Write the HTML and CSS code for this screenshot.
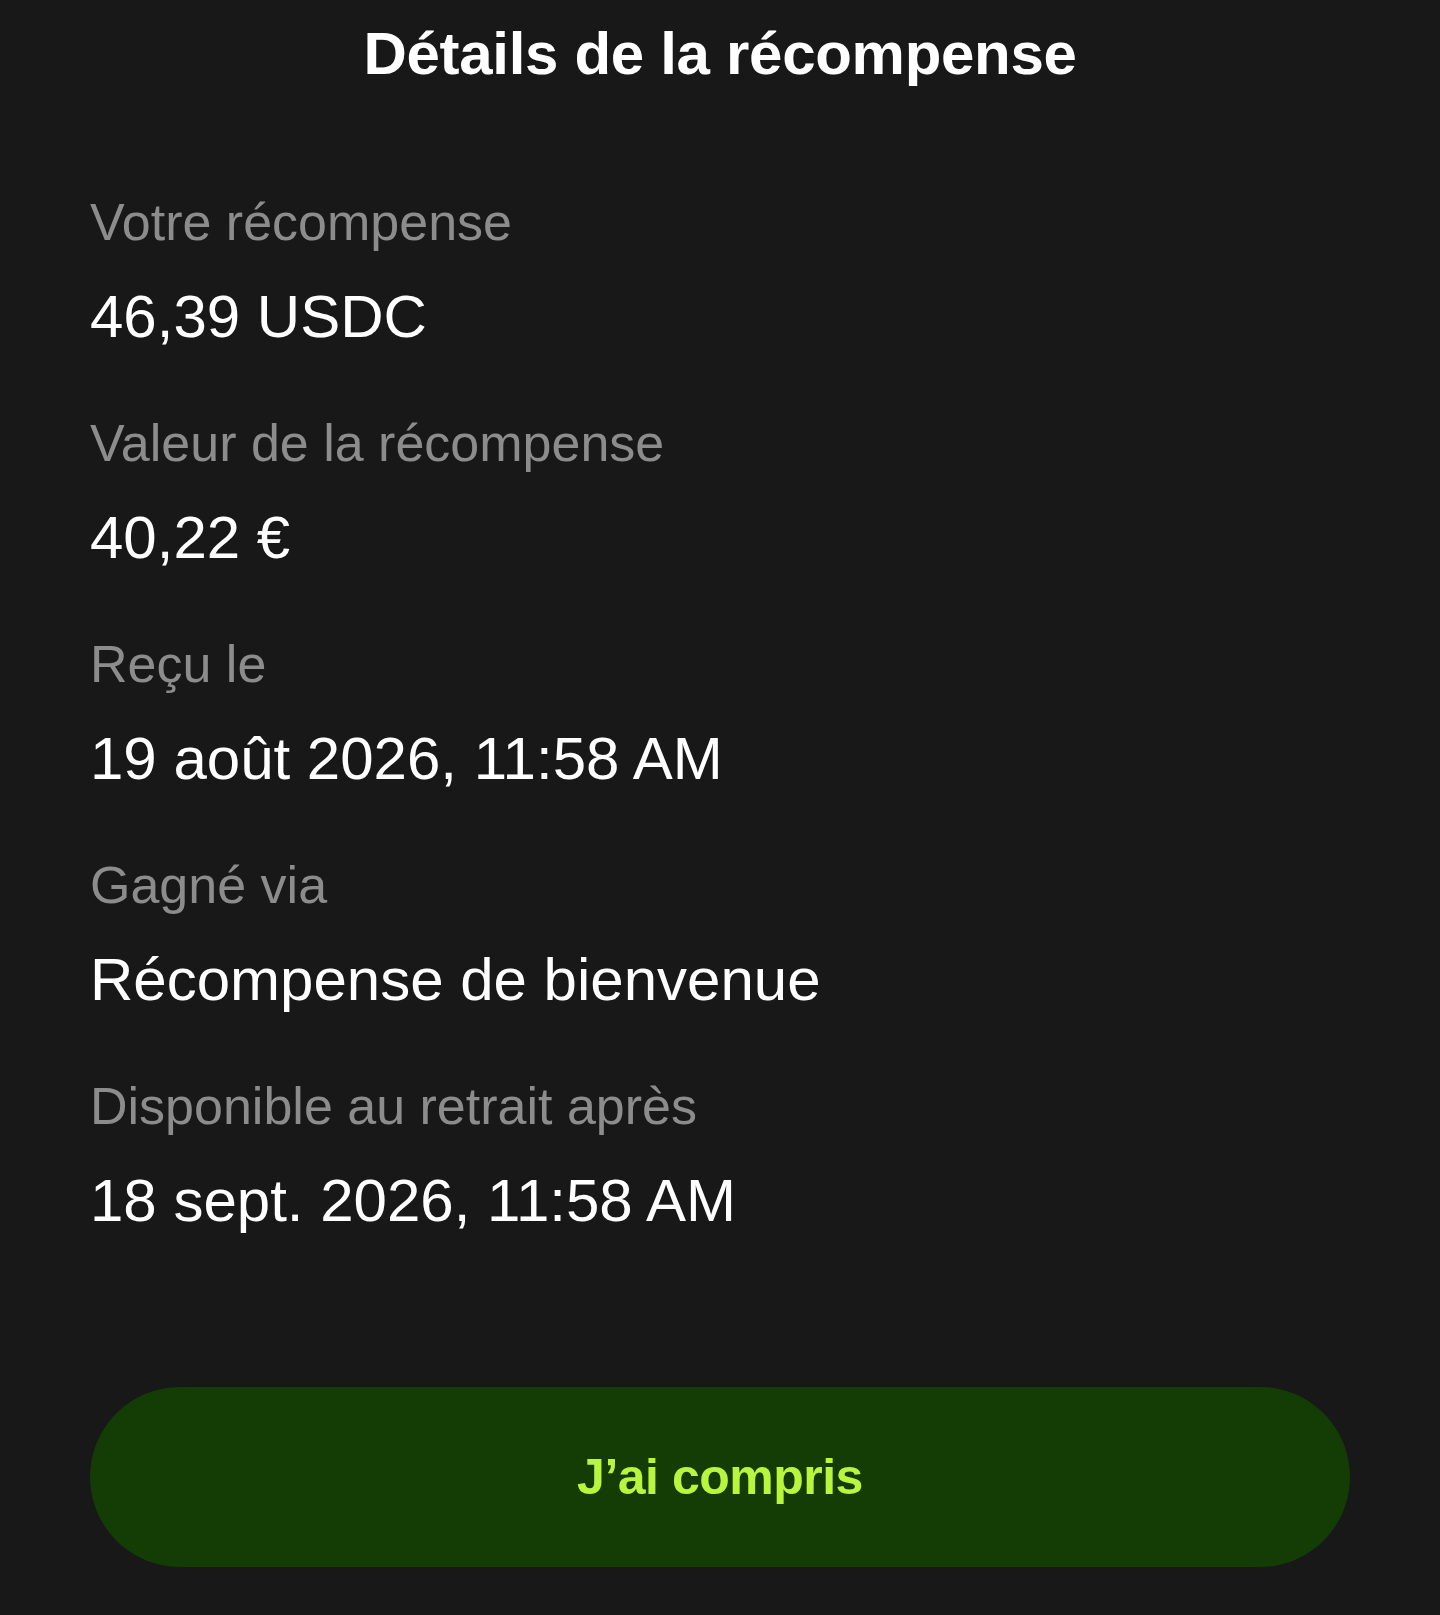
FILE: index.html
```html
<html>
  <head>
    <title>Détails de la récompense</title>
    <link rel="stylesheet" href="styles.css">
  </head>
  <body>
    <div class="sheet">
      <h1>Détails de la récompense</h1>

      <div class="details">
        <div class="row">
          <p class="label">Votre récompense</p>
          <p class="value">46,39 USDC</p>
        </div>
        <div class="row">
          <p class="label">Valeur de la récompense</p>
          <p class="value">40,22 €</p>
        </div>
        <div class="row">
          <p class="label">Reçu le</p>
          <p class="value">19 août 2026, 11:58 AM</p>
        </div>
        <div class="row">
          <p class="label">Gagné via</p>
          <p class="value">Récompense de bienvenue</p>
        </div>
        <div class="row">
          <p class="label">Disponible au retrait après</p>
          <p class="value">18 sept. 2026, 11:58 AM</p>
        </div>
      </div>

      <button class="ok">J’ai compris</button>
    </div>
  </body>
</html>
```

FILE: styles.css
```css
/* */
body {
  margin: 0;
  background: #181818;
  font-family: "Liberation Sans", Arial, sans-serif;
  color: #ffffff;
}
.sheet {
  padding: 24px 90px 48px 90px;
  display: flex;
  flex-direction: column;
}
h1 {
  margin: 0;
  font-size: 60px;
  line-height: 60px;
  font-weight: bold;
  text-align: center;
  letter-spacing: -0.3px;
}

/* Rows */
.details {
  margin-top: 112px;
  display: flex;
  flex-direction: column;
  gap: 70px;
}
.row p {
  margin: 0;
}
.label {
  font-size: 52px;
  line-height: 53px;
  color: #8c8c8c;
}
.value {
  margin-top: 38px !important;
  font-size: 60px;
  line-height: 60px;
  color: #ffffff;
}

/* Button */
.ok {
  margin-top: 156px;
  height: 180px;
  border: none;
  border-radius: 90px;
  background: #143d06;
  color: #b8f53f;
  font-family: "Liberation Sans", Arial, sans-serif;
  font-size: 50px;
  font-weight: bold;
  letter-spacing: -0.5px;
}
```
